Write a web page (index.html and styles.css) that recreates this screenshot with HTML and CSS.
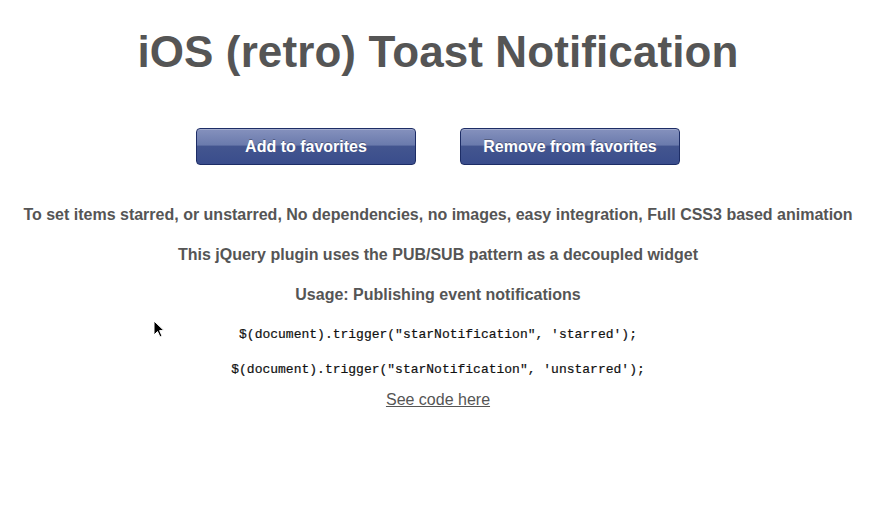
FILE: index.html
```html
<!DOCTYPE html>
<html>
<head>
<meta charset="utf-8">
<link rel="stylesheet" href="styles.css">
</head>
<body>
<main class="page">
  <h1 class="title">iOS (retro) Toast Notification</h1>
  <div class="actions">
    <button class="btn">Add to favorites</button>
    <button class="btn">Remove from favorites</button>
  </div>
  <p class="desc">To set items starred, or unstarred, No dependencies, no images, easy integration, Full CSS3 based animation</p>
  <p class="desc">This jQuery plugin uses the PUB/SUB pattern as a decoupled widget</p>
  <p class="desc">Usage: Publishing event notifications</p>
  <pre class="code">$(document).trigger("starNotification", 'starred');</pre>
  <pre class="code">$(document).trigger("starNotification", 'unstarred');</pre>
  <a class="link" href="#">See code here</a>
</main>
<svg class="cursor" width="12" height="19" viewBox="0 0 12 19"><path d="M1 1 L1 15 L4.5 11.5 L7 17 L9 16 L6.6 10.6 L11 10.6 Z" fill="#000" stroke="#fff" stroke-width="1"/></svg>
</body>
</html>
```

FILE: styles.css
```css
html, body { margin: 0; padding: 0; background: #fff; }
body { font-family: "Liberation Sans", Arial, sans-serif; color: #555; position: relative; }
.page { display: flex; flex-direction: column; align-items: center; padding-top: 22px; padding-right: 10px; }
.title { margin: 0; font-size: 44px; font-weight: bold; color: #555; line-height: 60px; letter-spacing: 0.1px; }
.actions { display: flex; gap: 44px; margin-top: 46px; }
.btn {
  width: 220px; height: 37px; border: 1px solid #1d2d66; border-radius: 4px;
  background: linear-gradient(to bottom, #8591bd 0%, #6b7bad 45%, #43558f 50%, #3a4d8c 100%);
  color: #fff; font-family: "Liberation Sans", Arial, sans-serif; font-weight: bold; font-size: 16px;
  text-shadow: 0 -1px 0 rgba(0,0,0,0.3); padding: 0; cursor: pointer;
  box-shadow: inset 0 1px 0 rgba(255,255,255,0.25);
}
.desc { margin: 0; font-size: 16px; font-weight: bold; line-height: 19px; text-align: center; }
.desc:nth-of-type(1) { margin-top: 40px; }
.desc + .desc { margin-top: 21px; }
.code { margin: 0; font-family: "Liberation Mono", "Courier New", monospace; font-size: 13px; color: #111; line-height: 15px; -webkit-text-stroke: 0.2px #111; }
.desc + .code { margin-top: 23px; }
.code + .code { margin-top: 20px; }
.link { margin-top: 14px; font-size: 16px; color: #555; text-decoration: underline; line-height: 18px; }
.cursor { position: absolute; left: 153px; top: 320px; }
```
